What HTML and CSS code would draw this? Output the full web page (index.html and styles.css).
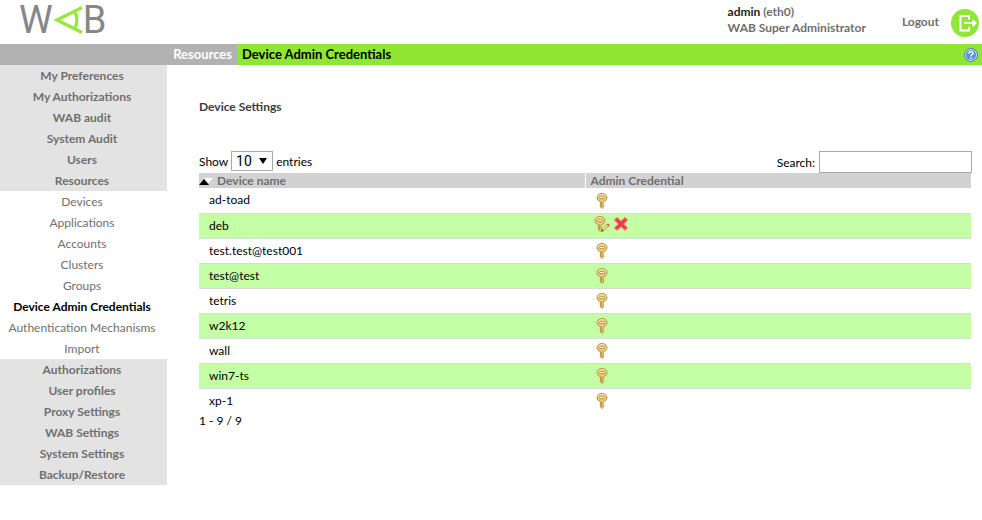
FILE: index.html
```
<!DOCTYPE html>
<html lang="en">
<head>
    <meta charset="UTF-8">
    <meta name="viewport" content="width=device-width, initial-scale=1.0">
    <title>WAB - Device Admin Credentials</title>
    <link rel="stylesheet" href="styles.css">
</head>
<body>
    <!-- Shared icon shapes -->
    <svg class="sprites" width="0" height="0" aria-hidden="true">
        <symbol id="key" viewBox="0 0 16 16">
            <path d="M8 .5C5.100.5 3 2.300 3 4.700c0 1.900 1.500 3.400 3.400 3.900v5.300L8 15.500l1.600-1.400v-1.400l-.7-.7.7-.9-.7-.9.7-.8V8.600C11.500 8.100 13 6.600 13 4.700 13 2.300 10.900.5 8 .5z" fill="#edc970" stroke="#b48b42" stroke-width=".9"/>
            <path d="M4.200 4.300C4.600 2.500 6 1.700 8 1.700s3.200.9 3.700 2.400" fill="none" stroke="#f9e8b4"/>
            <rect x="5.500" y="3.600" width="5" height="2" rx="1" fill="#fff" stroke="#a67c32" stroke-width=".8"/>
            <path d="M7.600 8.500v5.500" stroke="#b08435" stroke-width=".7"/>
        </symbol>
        <symbol id="pencil" viewBox="0 0 16 16">
            <path d="M8 15.200l.9-2.700 4.300-4.300 1.700 1.700-4.300 4.300z" fill="#f8e37a" stroke="#8d8046" stroke-width=".7"/>
            <path d="M12.600 8.600l1.400-1.400 1.800 1.800-1.400 1.400z" fill="#e0574c"/>
            <path d="M7.500 15.700l.6-1.900 1.300 1.300z" fill="#222"/>
        </symbol>
        <symbol id="cross" viewBox="0 0 16 16">
            <path d="M4 1.300L8 5.100l4-3.800L14.700 4l-3.900 4 3.900 3.900-2.700 2.600-4-3.800-4 3.800-2.700-2.600L5.200 8 1.300 4z" fill="#f0484c" stroke="#f58a8a" stroke-width="1" stroke-linejoin="round"/>
            <path d="M4.200 4.200l7.600 7.600M11.800 4.200l-7.600 7.600" stroke="#e8343b" stroke-width="1.200"/>
        </symbol>
    </svg>

    <header class="header">
        <a class="logo" href="#" aria-label="WAB">
            <span>W</span>
            <svg width="30" height="28" viewBox="0 0 30 28" aria-hidden="true">
                <path d="M29 1.500L4 14l25 12.500M21.500 5.500c3.200 4.500 3.200 12.500 0 17" fill="none" stroke="#97e83c" stroke-width="3.300"/>
            </svg>
            <span>B</span>
        </a>
        <div class="user">
            <div><span class="user-name">admin</span> (eth0)</div>
            <div>WAB Super Administrator</div>
        </div>
        <a class="logout" href="#">
            <span>Logout</span>
            <svg width="28" height="28" viewBox="0 0 28 28" aria-hidden="true">
                <circle cx="14" cy="14" r="14" fill="#8fe733"/>
                <path d="M18 10.500V7H9.500v14.500H18V18M13 14h11M21.500 11l3 3-3 3" fill="none" stroke="#fff" stroke-width="2"/>
            </svg>
        </a>
    </header>

    <nav class="breadcrumb" aria-label="Breadcrumb">
        <a class="crumb" href="#">Resources</a>
        <span class="crumb-current">Device Admin Credentials</span>
        <a class="help" href="#" aria-label="Help">
            <svg width="14" height="14" viewBox="0 0 14 14" aria-hidden="true">
                <circle cx="7" cy="7" r="6.500" fill="#5b92d6" stroke="#5f80b2"/>
                <circle cx="7" cy="7" r="5.500" fill="none" stroke="#c9def5"/>
                <path d="M5 5.500c0-2.600 4-2.400 4-.3 0 1.300-2 1.400-2 3M7 9.400v1.500" fill="none" stroke="#fff" stroke-width="1.500"/>
            </svg>
        </a>
    </nav>

    <div class="page">
        <nav class="menu" aria-label="Main menu">
            <a href="#">My Preferences</a>
            <a href="#">My Authorizations</a>
            <a href="#">WAB audit</a>
            <a href="#">System Audit</a>
            <a href="#">Users</a>
            <a href="#">Resources</a>
            <div class="submenu">
                <a href="#">Devices</a>
                <a href="#">Applications</a>
                <a href="#">Accounts</a>
                <a href="#">Clusters</a>
                <a href="#">Groups</a>
                <a class="active" href="#">Device Admin Credentials</a>
                <a href="#">Authentication Mechanisms</a>
                <a href="#">Import</a>
            </div>
            <a href="#">Authorizations</a>
            <a href="#">User profiles</a>
            <a href="#">Proxy Settings</a>
            <a href="#">WAB Settings</a>
            <a href="#">System Settings</a>
            <a href="#">Backup/Restore</a>
        </nav>

        <main class="content">
            <h1>Device Settings</h1>
            <div class="controls">
                <label class="length">Show
                    <select>
                        <option>10</option>
                        <option>25</option>
                        <option>50</option>
                    </select>
                    entries</label>
                <label class="search">Search: <input type="text"></label>
            </div>
            <table class="devices">
                <thead>
                    <tr>
                        <th class="col-name"><svg class="sort" width="14" height="7" viewBox="0 0 14 7" aria-hidden="true"><path d="M5 0h9L9.500 5z" fill="#fff"/><path d="M0 7l5-6 5 6z" fill="#000"/></svg>Device name</th>
                        <th>Admin Credential</th>
                    </tr>
                </thead>
                <tbody>
                    <tr><td>ad-toad</td><td><a href="#" aria-label="Add credential"><svg><use href="#key"/></svg></a></td></tr>
                    <tr><td>deb</td><td class="set"><a href="#" aria-label="Edit credential"><svg><use href="#key" x="-2"/><use href="#pencil"/></svg></a><a href="#" aria-label="Delete credential"><svg><use href="#cross"/></svg></a></td></tr>
                    <tr><td>test.test@test001</td><td><a href="#" aria-label="Add credential"><svg><use href="#key"/></svg></a></td></tr>
                    <tr><td>test@test</td><td><a href="#" aria-label="Add credential"><svg><use href="#key"/></svg></a></td></tr>
                    <tr><td>tetris</td><td><a href="#" aria-label="Add credential"><svg><use href="#key"/></svg></a></td></tr>
                    <tr><td>w2k12</td><td><a href="#" aria-label="Add credential"><svg><use href="#key"/></svg></a></td></tr>
                    <tr><td>wall</td><td><a href="#" aria-label="Add credential"><svg><use href="#key"/></svg></a></td></tr>
                    <tr><td>win7-ts</td><td><a href="#" aria-label="Add credential"><svg><use href="#key"/></svg></a></td></tr>
                    <tr><td>xp-1</td><td><a href="#" aria-label="Add credential"><svg><use href="#key"/></svg></a></td></tr>
                </tbody>
            </table>
            <div class="info">1 - 9 / 9</div>
        </main>
    </div>
</body>
</html>
```
FILE: styles.css
```
* { box-sizing: border-box; }
body { margin: 0; background: #fff; color: #000; font-family: "Century Gothic", Lato, sans-serif; font-size: 12px; line-height: 16px; }
a { color: inherit; text-decoration: none; }
.sprites { display: block; }

/* Header */
.header { display: flex; height: 44px; padding: 0 3px 0 19px; color: #706f6f; font-weight: bold; }
.logo { display: flex; align-items: center; height: 40px; margin-right: auto; color: #868789; font-family: Roboto, sans-serif; font-size: 38px; font-weight: normal; line-height: 40px; }
.user { padding-top: 4px; margin-right: 36px; }
.user-name { color: #1d1d1b; }
.logout { display: flex; gap: 12px; padding-top: 9px; line-height: 26px; }

/* Breadcrumb bar */
.breadcrumb { display: flex; align-items: center; background: #8fe733; font-size: 13px; font-weight: bold; line-height: 21px; }
.crumb { width: 237px; padding-right: 5px; background: #b2b2b2; color: #fff; text-align: right; }
.crumb-current { flex: 1; padding-left: 5px; }
.help { display: flex; padding-right: 4px; }

/* Left menu */
.page { display: flex; align-items: flex-start; }
.menu { flex: none; width: 167px; background: #e3e3e3; color: #706f6f; font-weight: bold; line-height: 21px; text-align: center; }
.menu a { display: block; padding-right: 3px; }
.submenu { background: #fff; font-weight: normal; }
.submenu .active { color: #000; font-weight: bold; }

/* Device table */
.content { flex: 1; padding: 34px 11px 0 32px; }
h1 { margin: 0 0 36px; color: #3c3c3b; font-size: 12px; line-height: 16px; }
.controls { display: flex; justify-content: space-between; height: 22px; }
.length { line-height: 20px; }
.length select {
    appearance: none;
    width: 42px;
    height: 20px;
    padding: 0 4px;
    border: 1px solid #a9a9a9;
    border-radius: 0;
    background: #fff url("data:image/svg+xml,%3Csvg xmlns='http://www.w3.org/2000/svg' width='8' height='6'%3E%3Cpath d='M0 0h8L4 6z'/%3E%3C/svg%3E") no-repeat right 5px center;
    font-family: Roboto, sans-serif;
    font-size: 14px;
}
.search { display: flex; gap: 4px; line-height: 24px; margin-right: -1px; }
.search input { width: 153px; height: 22px; border: 1px solid #a9a9a9; }
.devices { width: 100%; border-collapse: collapse; table-layout: fixed; }
.devices th { height: 15px; padding: 0 5px; background: #d2d2d2; color: #706f6f; line-height: 15px; text-align: left; }
.devices .col-name { width: 50%; padding-left: 0; border-right: 1px solid #fff; }
.sort { margin-right: 4px; }
.devices td { height: 25px; padding: 0 9px; border-bottom: 1px solid #dadada; line-height: 16px; }
.devices td:first-child { padding-left: 10px; }
.devices tr:nth-child(even) td { background: #c4ffa6; }
.devices tr:last-child td { border-bottom: 0; }
.devices td a { display: inline-block; margin-right: 3px; vertical-align: middle; }
.devices td svg { display: block; width: 16px; height: 16px; }
.devices .set { padding-bottom: 3px; }
.info { line-height: 16px; }
```
